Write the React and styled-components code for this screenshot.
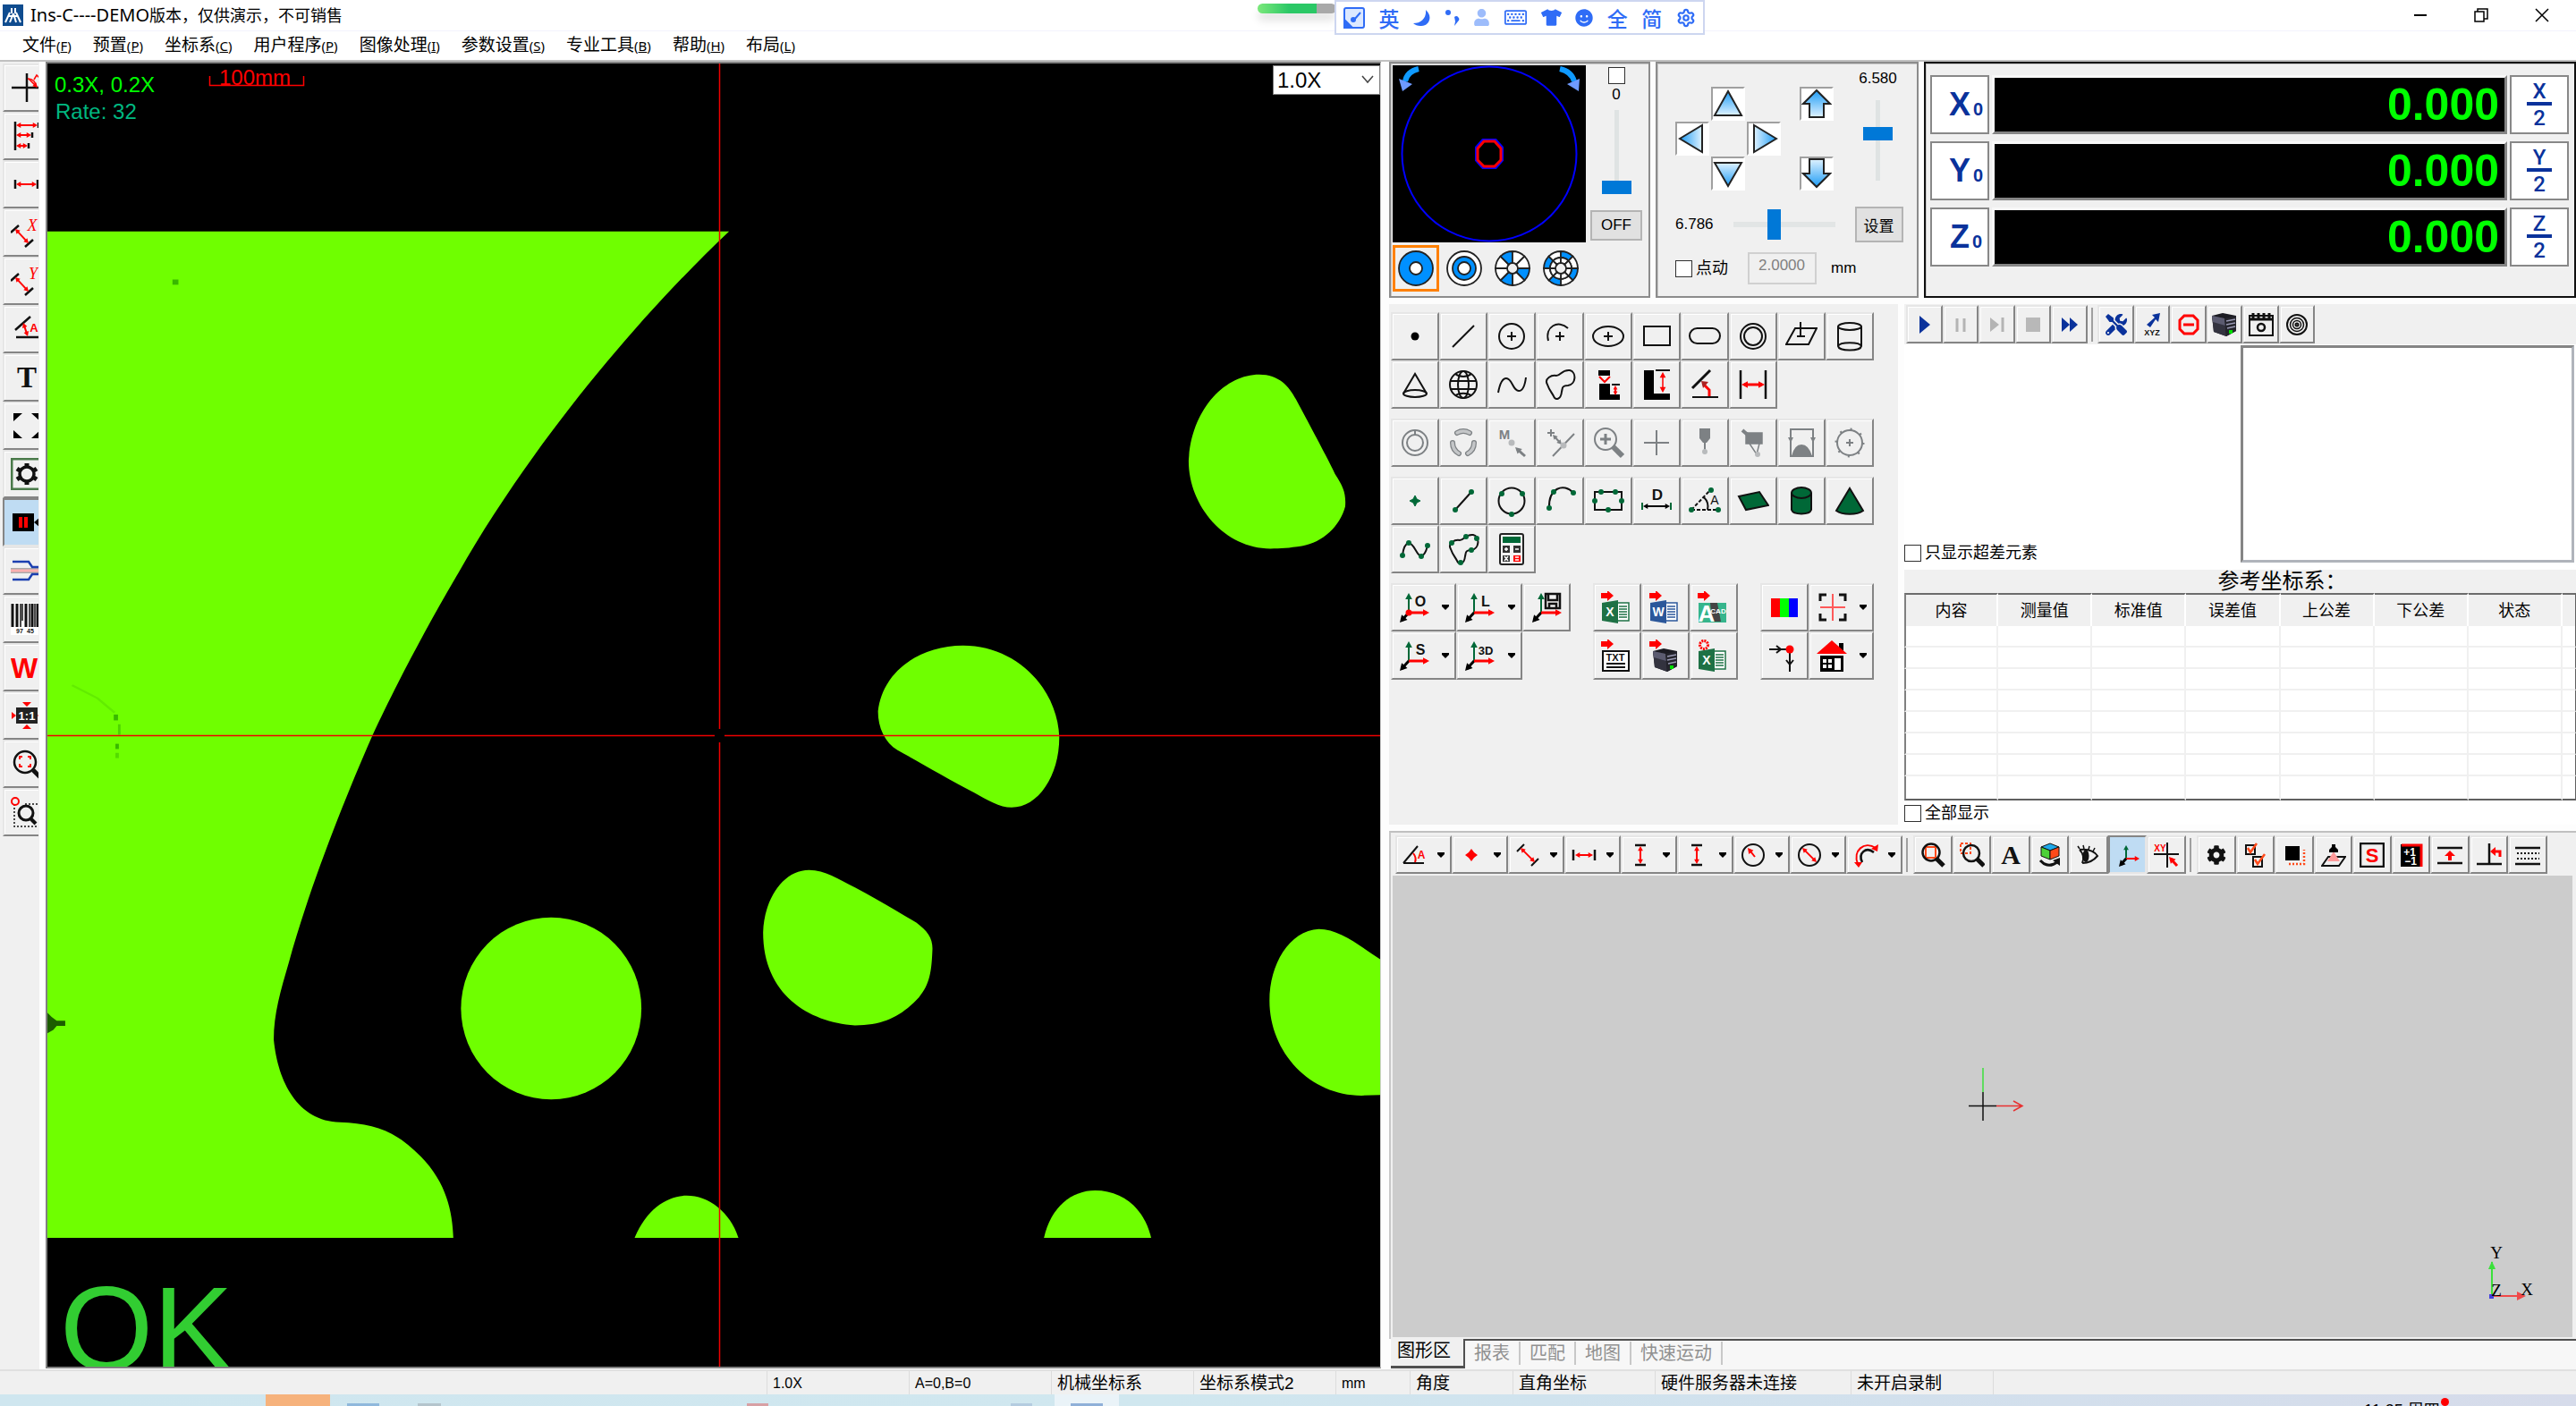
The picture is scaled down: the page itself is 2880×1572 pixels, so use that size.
import React, { useState } from 'react';
import styled, { createGlobalStyle, css } from 'styled-components';
import { FaMoon, FaUser, FaRegKeyboard, FaTshirt, FaSmile, FaCog, FaTools } from 'react-icons/fa';
import { Settings } from 'lucide-react';

const GREEN = '#006837';
const RED = '#ff0000';
const NAVY = '#0a329b';
const CJK = '"Liberation Sans", "Noto Sans CJK SC", sans-serif';

const GlobalStyle = createGlobalStyle`
    * {
        box-sizing: border-box;
    }
    body {
        margin: 0;
        background: #fdfdfd;
        color: #000000;
        font-family: ${CJK};
        font-size: 18px;
    }
    button, input, select {
        font-family: inherit;
        color: inherit;
        margin: 0;
    }
    svg {
        display: block;
        flex-shrink: 0;
    }
`;

/* ---------- layout ---------- */

const Page = styled.div`
    display: flex;
    flex-direction: column;
    height: 100vh;
    overflow: hidden;
`;

const TitleBar = styled.header`
    position: relative;
    height: 35px;
    display: flex;
    align-items: center;
    padding-left: 3px;
    gap: 8px;
    background: #ffffff;
    border-bottom: 1px solid #f3f3fd;
`;

const Title = styled.h1`
    margin: 0;
    flex: 1;
    font-size: 18px;
    font-weight: 400;
    line-height: 32px;
`;

const TitleLatin = styled.span`
    font-family: "Noto Sans", sans-serif;
    font-size: 20px;
`;

const WindowButtons = styled.div`
    display: flex;
    padding-right: 4px;
`;

const WindowButton = styled.button`
    width: 68px;
    height: 32px;
    padding: 0;
    border: none;
    background: none;
    display: flex;
    justify-content: center;
    align-items: center;
`;

const Progress = styled.div`
    position: absolute;
    left: 1406px;
    top: 4px;
    width: 88px;
    height: 11px;
    border-radius: 6px;
    background: linear-gradient(90deg, #7be87b, #2bc866 40%, #2bc866 75%, #a9a9a9 75%);
    box-shadow: 0 8px 10px #e4e4e4;
`;

const ImeBar = styled.div`
    position: absolute;
    left: 1492px;
    top: 0;
    width: 414px;
    height: 39px;
    padding: 0 8px;
    display: flex;
    align-items: center;
    justify-content: space-between;
    background: #ffffff;
    border: 2px solid #cdd6f0;
    color: #2f6cf6;
    font-size: 23px;
    font-weight: 500;
    z-index: 2;
`;

const MenuBar = styled.nav`
    height: 32px;
    padding-left: 25px;
    display: flex;
    align-items: center;
    gap: 24px;
    background: #ffffff;
`;

const MenuLink = styled.a`
    color: #000000;
    font-size: 19px;
    line-height: 30px;
    text-decoration: none;
    white-space: nowrap;
`;

const HotKey = styled.span`
    font-family: "Noto Sans", sans-serif;
    font-size: 15px;
`;

const Main = styled.main`
    flex: 1;
    min-height: 0;
    display: grid;
    grid-template-columns: 51px minmax(0, 1493fr) minmax(0, 1336fr);
    border-top: 2px solid #c0c0c0;
`;

const SideBar = styled.aside`
    background: linear-gradient(90deg, #f0f0f0 44px, #ffffff 44px);
    padding: 2px 0 0 3px;
`;

const bevel = css`
    border: 2px solid;
    border-color: #e6e6e6 #858585 #858585 #e6e6e6;
    box-shadow: inset 1px 1px #ffffff;
`;

const SideButton = styled.button`
    width: 40px;
    height: 54px;
    padding: 0 0 0 7px;
    display: flex;
    align-items: center;
    overflow: hidden;
    background: ${(props) => (props.$active ? '#bfdcf3' : '#f0f0f0')};
    ${bevel}
    border-right: none;
    ${(props) => props.$active && css`
        border-color: #858585 #858585 #e6e6e6 #858585;
        box-shadow: none;
    `}
`;

const Viewport = styled.section`
    position: relative;
    margin-bottom: 1px;
    border: 2px solid #808080;
    border-right: 1px solid #d0d0d0;
    background: #000000;
    overflow: hidden;
`;

const ViewportPicture = styled.svg`
    position: absolute;
    left: 0;
    top: 0;
    width: 100%;
    height: 100%;
`;

const ZoomBox = styled.div`
    position: absolute;
    right: 0;
    top: 2px;
    width: 120px;
    height: 33px;
    background: #ffffff;
    border: 1px solid #808080;
`;

const ZoomSelect = styled.select`
    appearance: none;
    width: 100%;
    height: 100%;
    padding: 0 4px;
    border: none;
    background: none;
    font-size: 24px;
`;

const ZoomChevron = styled.svg`
    position: absolute;
    right: 6px;
    top: 10px;
    pointer-events: none;
`;

const RightSide = styled.div`
    display: flex;
    flex-direction: column;
    padding-left: 9px;
    min-height: 0;
`;

const TopRow = styled.div`
    display: grid;
    grid-template-columns: 292px 294px minmax(0, 1fr);
    gap: 6px;
    height: 264px;
`;

const Panel = styled.section`
    background: #f0f0f0;
    border: 2px solid ${(props) => (props.$dark ? '#101010' : '#8c8c8c')};
    box-shadow: inset 1px 1px #c8c8c8;
`;

const MidRow = styled.div`
    display: grid;
    grid-template-columns: 569px minmax(0, 1fr);
    gap: 7px;
    height: 582px;
    margin: 7px 0;
`;

/* ---------- controls ---------- */

const ToolButton = styled.button`
    width: ${(props) => props.$w || 54}px;
    height: ${(props) => props.$h || 54}px;
    padding: 0 ${(props) => (props.$drop ? '6px' : '0')};
    display: flex;
    align-items: center;
    justify-content: ${(props) => (props.$drop ? 'space-between' : 'center')};
    background: ${(props) => (props.$active ? '#bfdcf3' : '#f0f0f0')};
    ${bevel}
    ${(props) => props.$active && css`
        border-color: #858585 #e6e6e6 #e6e6e6 #858585;
        box-shadow: none;
    `}
`;

const CheckBox = styled.input`
    appearance: none;
    width: 19px;
    height: 19px;
    flex-shrink: 0;
    border: 1px solid #303030;
    background: #ffffff;
    &:checked {
        background: #0078d7;
    }
`;

const CheckLabel = styled.label`
    display: flex;
    align-items: center;
    gap: 4px;
    font-size: 18px;
    line-height: 22px;
`;

const thumb = css`
    appearance: none;
    border: none;
    border-radius: 0;
    background: #0078d7;
`;

const HSlider = styled.input`
    appearance: none;
    width: 114px;
    height: 34px;
    background: linear-gradient(#e2e5e5, #e2e5e5) center / 100% 6px no-repeat;
    &::-webkit-slider-thumb {
        ${thumb}
        width: 15px;
        height: 34px;
    }
`;

const VSlider = styled.input`
    appearance: none;
    writing-mode: vertical-lr;
    direction: rtl;
    width: 33px;
    height: ${(props) => props.$length}px;
    background: linear-gradient(#dfe3e3, #dfe3e3) center / 5px 100% no-repeat;
    &::-webkit-slider-thumb {
        ${thumb}
        width: 33px;
        height: 15px;
    }
`;

const FlatButton = styled.button`
    width: ${(props) => props.$w}px;
    height: ${(props) => props.$h}px;
    padding: 0;
    border: 2px solid #b4b4b4;
    background: #e1e1e1;
    font-size: 17px;
`;

/* ---------- light panel ---------- */

const LightPanel = styled(Panel)`
    padding: 2px 2px 0;
    display: grid;
    grid-template-columns: 216px 58px;
    grid-template-rows: 198px 52px;
    column-gap: 5px;
    row-gap: 3px;
`;

const RingBox = styled.div`
    background: #000000;
`;

const LightColumn = styled.div`
    display: flex;
    flex-direction: column;
    align-items: center;
    padding-top: 2px;
`;

const LightValue = styled.output`
    font-size: 17px;
    line-height: 24px;
    margin-bottom: 5px;
`;

const LightOff = styled(FlatButton)`
    margin-top: 18px;
`;

const RingRow = styled.div`
    grid-column: 1 / 3;
    display: flex;
    gap: 2px;
`;

const RingButton = styled.button`
    width: 52px;
    height: 52px;
    padding: 0;
    display: flex;
    align-items: center;
    justify-content: center;
    background: none;
    border: 3px solid ${(props) => (props.$active ? '#ff8000' : 'transparent')};
`;

/* ---------- motion panel ---------- */

const MotionPanel = styled(Panel)`
    padding: 5px 14px 0 20px;
    display: flex;
    flex-direction: column;
`;

const MotionTop = styled.div`
    display: flex;
    height: 137px;
`;

const Pad = styled.div`
    display: grid;
    grid-template-columns: repeat(3, 39px);
    grid-template-rows: repeat(3, 39px);
    grid-template-areas: ". up ." "left . right" ". down .";
    column-gap: 1px;
    margin-top: 21px;
`;

const PadButton = styled.button`
    grid-area: ${(props) => props.$area || 'auto'};
    width: 38px;
    height: 38px;
    padding: 0;
    display: flex;
    align-items: center;
    justify-content: center;
    background: #ffffff;
    border: 2px solid;
    border-color: #a0a0a0 #ffffff #ffffff #a0a0a0;
`;

const Lift = styled.div`
    margin: 21px 0 0 20px;
    display: flex;
    flex-direction: column;
    gap: 40px;
`;

const SpeedColumn = styled.div`
    flex: 1;
    display: flex;
    flex-direction: column;
    align-items: center;
    gap: 12px;
    padding-left: 20px;
    font-size: 17px;
    line-height: 24px;
`;

const MotionRow = styled.div`
    display: flex;
    align-items: center;
    gap: 22px;
    height: 40px;
    margin-top: 18px;
    font-size: 17px;
`;

const JogRow = styled.div`
    display: flex;
    align-items: center;
    gap: 16px;
    margin-top: 11px;
    font-size: 17px;
`;

const JogInput = styled.input`
    width: 77px;
    height: 36px;
    margin-left: 6px;
    padding: 0 10px 6px;
    border: 2px solid #d0d0d0;
    background: #f0f0f0;
    color: #808080;
    font-size: 17px;
`;

/* ---------- readout ---------- */

const Readout = styled(Panel)`
    padding: 13px 6px 0 5px;
    display: flex;
    flex-direction: column;
    gap: 8px;
`;

const AxisRow = styled.div`
    display: grid;
    grid-template-columns: 66px minmax(0, 1fr) 66px;
    gap: 3px;
    height: 66px;
`;

const AxisButton = styled.button`
    padding: 0;
    background: #ffffff;
    border: 2px solid #888888;
    color: ${NAVY};
    display: flex;
    align-items: center;
    justify-content: center;
`;

const ZeroButton = styled(AxisButton)`
    align-items: baseline;
    padding: 9px 4px 0 18px;
    gap: 3px;
    font-size: 36px;
    font-weight: 700;
    line-height: 44px;
`;

const ZeroSub = styled.span`
    font-size: 20px;
`;

const HalfButton = styled(AxisButton)`
    flex-direction: column;
    font-family: Roboto, sans-serif;
    font-size: 24px;
    font-weight: 500;
    line-height: 22px;
`;

const HalfBar = styled.span`
    width: 28px;
    height: 4px;
    margin: 1px 0 3px;
    background: ${NAVY};
`;

const AxisValue = styled.output`
    padding-right: 6px;
    border: 3px solid;
    border-color: #f8f8f8 #858585 #858585 #f8f8f8;
    background: #000000;
    color: #00ff00;
    font-size: 50px;
    font-weight: 700;
    line-height: 60px;
    text-align: right;
`;

/* ---------- tool area ---------- */

const ToolArea = styled.section`
    background: #f0f0f0;
    padding: 9px 2px;
    display: flex;
    flex-direction: column;
    gap: 11px;
`;

const ToolGrid = styled.div`
    display: grid;
    grid-template-columns: repeat(10, 54px);
`;

const ToolGroups = styled.div`
    display: flex;
    gap: 25px;
`;

const ToolGroup = styled.div`
    display: grid;
    grid-template-columns: ${(props) => props.$cols};
    align-content: start;
`;

/* ---------- elements panel ---------- */

const ElementPanel = styled.section`
    display: flex;
    flex-direction: column;
    background: #ffffff;
`;

const RunBar = styled.div`
    height: 45px;
    padding: 1px 2px;
    display: flex;
    align-items: center;
    background: #f0f0f0;
`;

const BarSeparator = styled.span`
    width: 2px;
    height: 38px;
    margin: 0 ${(props) => props.$right || 4}px 0 4px;
    background: #a0a0a0;
`;

const ListRow = styled.div`
    height: 244px;
    display: grid;
    grid-template-columns: 1fr 1fr;
`;

const ListLeft = styled.div`
    display: flex;
    align-items: flex-end;
`;

const ListBox = styled.div`
    margin: 1px 2px 0 0;
    border: 3px solid;
    border-color: #858585 #b0b4bb #b0b4bb #858585;
    background: #ffffff;
`;

const ElementTable = styled.table`
    width: 100%;
    margin-top: 8px;
    border-collapse: separate;
    border-spacing: 0;
    table-layout: fixed;
`;

const Caption = styled.caption`
    height: 26px;
    padding-left: 94px;
    background: #f0f0f0;
    font-size: 24px;
    line-height: 26px;
`;

const HeadCell = styled.th`
    width: ${(props) => props.$w};
    height: 37px;
    padding: 0;
    background: #f0f0f0;
    border-top: 2px solid #6c6c6c;
    border-right: 2px solid #ffffff;
    font-weight: 400;
    line-height: 24px;
    &:first-child {
        border-left: 2px solid #808080;
    }
    &:last-child {
        border-right: 1px solid #606060;
    }
`;

const Cell = styled.td`
    height: 24px;
    padding: 0;
    border-right: 2px solid #f0f0f0;
    border-bottom: 2px solid #f0f0f0;
    &:first-child {
        border-left: 2px solid #808080;
    }
    &:last-child {
        border-right: 1px solid #606060;
    }
    tr:last-child > & {
        height: 27px;
        border-bottom: 2px solid #606060;
    }
`;

const ShowAll = styled.div`
    padding-top: 3px;
`;

/* ---------- graph ---------- */

const GraphPanel = styled.section`
    flex: 1;
    min-height: 0;
    display: flex;
    flex-direction: column;
    padding: 0 4px 2px 2px;
    background: #f0f0f0;
    border-top: 2px solid #c0c0c0;
    border-left: 2px solid #c8c8c8;
`;

const GraphBar = styled.div`
    height: 48px;
    padding: 1px 3px 0;
    display: flex;
    align-items: center;
`;

const GraphCanvas = styled.div`
    position: relative;
    flex: 1;
    min-height: 0;
    background: #cccccc;
`;

const Origin = styled.svg`
    position: absolute;
    left: 50%;
    top: 50%;
    margin: -44px 0 0 -18px;
`;

const AxesMark = styled.svg`
    position: absolute;
    right: 44px;
    bottom: 34px;
`;

const Tabs = styled.div`
    height: 34px;
    display: flex;
    align-items: flex-start;
    background: #f7f7f7;
    border-top: 2px solid #505050;
    margin-left: 2px;
`;

const Tab = styled.button`
    height: ${(props) => (props.$active ? 33 : 26)}px;
    margin-top: ${(props) => (props.$active ? -2 : 1)}px;
    padding: ${(props) => (props.$active ? '0 14px 4px 7px' : '0 10px')};
    border: none;
    border-right: 2px solid ${(props) => (props.$active ? '#505050' : '#c8c8c8')};
    ${(props) => props.$active && 'border-bottom: 3px solid #505050;'}
    background: ${(props) => (props.$active ? '#f0f0f0' : 'none')};
    color: ${(props) => (props.$active ? '#000000' : '#909090')};
    font-size: 20px;
    line-height: 26px;
    white-space: nowrap;
`;

/* ---------- bottom ---------- */

const StatusBar = styled.footer`
    height: 28px;
    display: grid;
    grid-template-columns: ${(props) => props.$cols};
    background: #f0f0f0;
    border-top: 2px solid #e0e0e0;
`;

const StatusCell = styled.span`
    padding-left: 6px;
    border-left: 1px solid ${(props) => (props.$first ? 'transparent' : '#dcdcdc')};
    font-size: ${(props) => (props.$small ? 16 : 19)}px;
    line-height: 28px;
    white-space: nowrap;
`;

const TaskBar = styled.div`
    position: relative;
    height: 13px;
    overflow: hidden;
    background: linear-gradient(90deg, #cfe6ef, #d0e7ef 45%, #d0e3ee 60%, #d6dbea);
`;

const TaskItem = styled.span`
    position: absolute;
    left: ${(props) => props.$x}px;
    bottom: 0;
    width: ${(props) => props.$w}px;
    height: ${(props) => props.$h}px;
    background: ${(props) => props.$c};
`;

const Clock = styled.time`
    position: absolute;
    left: 2643px;
    top: 6px;
    font-size: 18px;
    line-height: 24px;
`;

const ClockDot = styled.span`
    position: absolute;
    left: 2729px;
    top: 4px;
    width: 9px;
    height: 9px;
    border-radius: 50%;
    background: ${RED};
`;

/* ---------- icon helpers ---------- */

const Icon = ({ box = 36, size, children }) => (
    <svg width={size || box} height={size || box} viewBox={`0 0 ${box} ${box}`} fill="none" stroke="#111" strokeWidth="2" aria-hidden="true">
        {children}
    </svg>
);

const Arrow = ({ x1, y1, x2, y2, c = RED, both, w = 2, h = 6 }) => {
    const a = Math.atan2(y2 - y1, x2 - x1);
    const head = (x, y, t) => {
        const p = (d) => `${x - h * Math.cos(t + d)},${y - h * Math.sin(t + d)}`;
        return <polygon points={`${x},${y} ${p(0.5)} ${p(-0.5)}`} fill={c} stroke="none" />;
    };
    return (
        <g>
            <line x1={both ? x1 + 3 * Math.cos(a) : x1} y1={both ? y1 + 3 * Math.sin(a) : y1} x2={x2 - 3 * Math.cos(a)} y2={y2 - 3 * Math.sin(a)} stroke={c} strokeWidth={w} />
            {head(x2, y2, a)}
            {both && head(x1, y1, a + Math.PI)}
        </g>
    );
};

const Letter = ({ x, y, s = 14, c = '#111', children, bold = true, serif, italic }) => (
    <text x={x} y={y} fontSize={s} fill={c} stroke="none" fontWeight={bold ? 700 : 400} fontStyle={italic ? 'italic' : 'normal'}
        fontFamily={serif ? 'Liberation Serif, serif' : 'Liberation Sans, sans-serif'} textAnchor="middle">{children}</text>
);

const Dots = ({ at, r = 3 }) => at.map(([x, y]) => <circle key={`${x}-${y}`} cx={x} cy={y} r={r} fill={GREEN} stroke="none" />);

const Caret = () => (
    <svg width="8" height="6" viewBox="0 0 8 6" aria-hidden="true"><path d="M0 0H8V2L4 6L0 2Z" fill="#000" /></svg>
);

const Server = ({ x = 0, y = 0 }) => (
    <g transform={`translate(${x} ${y})`} stroke="none">
        <path d="M0 3L12 0L27 3V20L16 26L2 21Z" fill="#1b1b22" />
        <path d="M0 3L14 6L16 26L2 21Z" fill="#33333f" />
        <path d="M0 3L14 6L15 14L1 10Z" fill="#5b5b70" />
        <path d="M14 6L27 3V20L16 26Z" fill="#24242c" />
        <path d="M16 9L26 7M16 13L26 11M17 17L26 15" stroke="#9a9ab4" strokeWidth="1.5" />
        <rect x="19" y="19" width="4" height="4" fill="#00e000" />
    </g>
);

const Book = ({ c, letter }) => (
    <g>
        <rect x="17" y="13" width="14" height="20" fill="#fff" stroke={c} strokeWidth="1.5" />
        <path d="M20 17H29M20 20H29M20 23H29M20 26H29M20 29H29" stroke={c} strokeWidth="1.5" />
        <path d="M1 13L19 10V36L1 33Z" fill={c} stroke="none" />
        <Letter x={10} y={28} s={14} c="#fff">{letter}</Letter>
    </g>
);

const RedArrow = () => <path d="M0 2H7V-1L14 5L7 11V8H0Z" fill={RED} stroke="none" />;

/* ---------- icons ---------- */

const sideIcons = [
    ['十字线', <><path d="M1 18H36M18 2V34" strokeWidth="2.5" /><path d="M19 8C25 8 28 12 28 16" stroke={RED} strokeWidth="1.5" /><Arrow x1={20} y1={8} x2={30} y2={18} w={1.5} /><path d="M26 9L29 4L33 8" stroke={RED} strokeWidth="1.5" /></>],
    ['连续测量', <><path d="M5 2V34M31 3V9M24 14V20M20 26V32" strokeWidth="2.5" /><Arrow both x1={6} y1={6} x2={30} y2={6} /><Arrow both x1={6} y1={17} x2={23} y2={17} /><Arrow both x1={6} y1={29} x2={19} y2={29} /></>],
    ['距离', <><path d="M5 13V23M30 13V23" strokeWidth="2.5" /><Arrow both x1={6} y1={18} x2={29} y2={18} /></>],
    ['X 距离', <><path d="M0 18L9 10M16 34L25 26" strokeWidth="2.5" /><Arrow both x1={5} y1={14} x2={20} y2={30} /><Letter x={24} y={16} s={18} c={RED} serif italic bold={false}>X</Letter></>],
    ['Y 距离', <><path d="M0 18L9 10M16 34L25 26" strokeWidth="2.5" /><Arrow both x1={5} y1={14} x2={20} y2={30} /><Letter x={25} y={16} s={18} c={RED} serif italic bold={false}>Y</Letter></>],
    ['角度', <><path d="M5 19L22 4M6 27H36" strokeWidth="2.5" /><Arrow both x1={14} y1={11} x2={19} y2={26} /><Letter x={26} y={21} s={13} c={RED}>A</Letter></>],
    ['文字', <Letter x={18} y={29} s={33} serif>T</Letter>],
    ['全屏', <path d="M3 4H13L3 13ZM33 4H23L33 13ZM3 32H13L3 23ZM33 32H23L33 23Z" fill="#000" stroke="none" />],
    ['设置', <><path d="M36 1H1V35H36" stroke="#4a7a4a" strokeWidth="3" /><g transform="translate(6 6)" stroke="#111" strokeWidth="3.5"><circle cx="12" cy="12" r="8" /><path d="M12 4V0M12 20V24M4 8L1 6M20 8L23 6M4 16L1 18M20 16L23 18" strokeWidth="5" /></g></>],
    ['暂停', <><rect x="2" y="8" width="24" height="20" fill="#000" stroke="none" /><path d="M11 12V24M17 12V24" stroke="#f00" strokeWidth="4" /><path d="M26 18L33 12V24Z" fill="#000" stroke="none" /></>],
    ['轮廓', <><path d="M0 18H36" stroke="#aaa" strokeWidth="6" /><path d="M0 18H36" stroke="#ffb0b0" strokeWidth="3" /><path d="M2 8H20L24 14H36M2 28H20L24 22H36" stroke="#1c40b0" strokeWidth="2.5" /></>],
    ['条码', <><rect x="0" y="0" width="36" height="36" fill="#fff" stroke="none" /><path d="M2 1V27M7 1V27M17 1V27M24 1V27M30 1V27" strokeWidth="3" /><path d="M11 1V27M13 1V20M21 1V27M27 1V27" strokeWidth="1.5" /><Letter x={10} y={34} s={7}>97</Letter><Letter x={22} y={34} s={7}>45</Letter></>],
    ['W', <Letter x={15} y={30} s={32} c="#f00">W</Letter>],
    ['1:1', <><rect x="6" y="9" width="24" height="18" fill="#222" stroke="none" /><Letter x={18} y={23} s={13} c="#fff">1:1</Letter><path d="M13 3H23L18 8ZM13 33H23L18 28ZM1 14V22L6 18ZM35 14V22L30 18Z" fill="#f00" stroke="none" /></>],
    ['适合窗口', <><circle cx="16" cy="16" r="12" strokeWidth="2.5" /><path d="M10 13V10H13M19 10H22V13M22 18V21H19M13 21H10V18" stroke="#f00" strokeWidth="2" /><path d="M25 25L33 33" strokeWidth="5" /></>],
    ['框选放大', <><path d="M4 9V34H32V9H14" strokeDasharray="2 2" strokeWidth="1.5" /><circle cx="17" cy="19" r="8" strokeWidth="3" /><path d="M22 25L28 31" strokeWidth="4" /><circle cx="5" cy="6" r="4" stroke="#f00" /></>],
];

const blob = 'M4 18C0 11 9 7 14 8C19 8 20 1 29 2C37 4 36 18 27 19C20 19 21 22 20 26C19 35 13 36 11 31C9 27 6 24 4 18Z';

const shapeIcons = [
    ['点', <circle cx="18" cy="18" r="4.5" fill="#000" stroke="none" />],
    ['线', <path d="M6 30L30 6" />],
    ['圆', <><circle cx="18" cy="18" r="14" /><path d="M18 13V23M13 18H23" /></>],
    ['弧', <><path d="M5 23C1 7 16 -1 27 9" /><path d="M18 13V23M13 18H23" /></>],
    ['椭圆', <><ellipse cx="18" cy="18" rx="17" ry="11" /><path d="M18 13V23M13 18H23" /></>],
    ['矩形', <rect x="4" y="7" width="29" height="21" />],
    ['键槽', <rect x="1" y="9" width="34" height="17" rx="8.5" />],
    ['圆环', <><circle cx="18" cy="18" r="14" /><circle cx="18" cy="18" r="10" /></>],
    ['平面', <><path d="M1 27L11 9H35L26 27Z" /><path d="M17 2V18M13 18H22" /></>],
    ['圆柱', <><ellipse cx="18" cy="7" rx="13" ry="4" /><path d="M5 7V29C6 35 30 35 31 29V7M5 29C7 24 29 24 31 29" /></>],
    ['圆锥', <><path d="M5 28L18 6L31 28" /><ellipse cx="18" cy="28" rx="13" ry="4" /></>],
    ['球', <><circle cx="18" cy="18" r="15" /><ellipse cx="18" cy="18" rx="6" ry="15" /><path d="M4 14H32M4 23H32M9 6C14 10 22 10 27 6M9 30C14 27 22 27 27 30" /></>],
    ['曲线', <path d="M3 27C5 16 8 11 12 11C19 11 19 25 26 25C31 25 33 18 34 10" />],
    ['闭合曲线', <path d={blob} />],
    ['高度', <><path d="M7 2H20V8H7ZM8 17H20V29H31V35H8Z" fill="#000" stroke="none" /><path d="M8 9L14 15L20 9" stroke="#f00" /><path d="M22 18H31" /><Arrow both x1={26} y1={19} x2={26} y2={30} h={5} /></>],
    ['深度', <><path d="M4 2H15V28H33V35H4Z" fill="#000" stroke="none" /><path d="M17 2H33" /><Arrow both x1={25} y1={4} x2={25} y2={27} h={7} w={1.5} /></>],
    ['夹角', <><path d="M4 22L24 2" strokeWidth="3" /><path d="M4 32H33" /><path d="M23 31V24L16 17" stroke="#f00" strokeWidth="3" /><path d="M14 14L22 15L16 22Z" fill="#a22" stroke="none" /></>],
    ['宽度', <><path d="M4 2V34M32 2V34" strokeWidth="2.5" /><Arrow both x1={5} y1={18} x2={31} y2={18} w={3} h={8} /></>],
];

const grey = '#7d8184';
const probeIcons = [
    ['内外圆', <g stroke={grey}><circle cx="18" cy="18" r="14" /><circle cx="18" cy="18" r="9" /><path d="M18 5V9" /></g>],
    ['三段圆', <g stroke={grey} strokeWidth="6" strokeLinecap="round"><path d="M11 7Q18 3 25 7M6 18Q6 26 13 30M30 18Q30 26 23 30" /><path d="M11 7Q18 3 25 7M6 18Q6 26 13 30M30 18Q30 26 23 30" stroke="#c4c6c8" strokeWidth="3.5" /></g>],
    ['中点', <g><Letter x={10} y={14} s={15} c={grey}>M</Letter><circle cx="18" cy="18" r="3.5" fill="#b8babc" stroke="none" /><Arrow x1={33} y1={33} x2={22} y2={23} c={grey} w={3} h={8} /></g>],
    ['投影', <g stroke={grey}><path d="M10 33L34 8M8 3V11M4 7H12" /><Arrow both x1={10} y1={9} x2={20} y2={20} c={grey} /><circle cx="22" cy="21" r="3.5" fill="#b8babc" stroke="none" /></g>],
    ['放大', <g stroke={grey}><circle cx="15" cy="14" r="12" /><path d="M15 8V20M9 14H21" strokeWidth="3" /><path d="M23 22L34 33" strokeWidth="6" /></g>],
    ['十字', <path d="M18 4V32M4 18H32" stroke={grey} />],
    ['测针', <g stroke="none" fill={grey}><path d="M12 2H24V13L20 18H16L12 13Z" /><path d="M18 18V28" stroke={grey} /><circle cx="18" cy="28" r="3" fill="#b8babc" /></g>],
    ['激光', <g fill={grey} stroke={grey} strokeWidth="1.5"><rect x="10" y="7" width="18" height="12" /><path d="M6 4L14 11" strokeWidth="4" /><path d="M14 19L22 31L25 19" fill="none" /><circle cx="23" cy="31" r="3" fill="#b8babc" stroke="none" /></g>],
    ['扫描', <g stroke={grey}><path d="M6 3H31V33H6Z" /><path d="M8 33C12 17 24 17 29 33Z" fill={grey} /><path d="M3 12H9L6 18ZM28 12H34L31 18Z" fill={grey} stroke="none" /></g>],
    ['多点圆', <g stroke={grey}><circle cx="18" cy="18" r="14" /><path d="M18 14V22M14 18H22" /><circle cx="18" cy="18" r="15" strokeDasharray="2 9.8" strokeWidth="3" /></g>],
];

const buildIcons = [
    ['构造点', <path d="M18 12L20 16L24 18L20 20L18 24L16 20L12 18L16 16Z" fill={GREEN} stroke={GREEN} strokeWidth="1" />],
    ['构造线', <><path d="M9 28L27 8" /><Dots at={[[9, 28], [27, 8]]} /></>],
    ['构造圆', <><circle cx="18" cy="18" r="14.5" /><Dots at={[[7, 10], [30, 10], [18, 33]]} /></>],
    ['构造弧', <><path d="M6 26C5 4 22 -3 33 9" /><Dots at={[[6, 26], [11, 8], [33, 9]]} /></>],
    ['构造矩形', <><rect x="3" y="8" width="30" height="20" /><Dots at={[[10, 8], [26, 8], [3, 18], [33, 18], [18, 28]]} /></>],
    ['构造距离', <><Letter x={19} y={17} s={17}>D</Letter><path d="M2 20V28M34 20V28" stroke={GREEN} /><Arrow both x1={3} y1={24} x2={33} y2={24} c="#000" /></>],
    ['构造角度', <><path d="M3 28L25 5M3 28H33" strokeDasharray="4 2" /><path d="M17 14Q23 20 21 28" /><Dots at={[[3, 28], [25, 6], [33, 28]]} /><Letter x={29} y={22} s={14} bold={false}>A</Letter></>],
    ['构造平面', <path d="M2 13L25 8L35 23L10 28Z" fill={GREEN} />],
    ['构造圆柱', <><path d="M7 9V28C9 34 27 34 29 28V9" fill={GREEN} /><ellipse cx="18" cy="9" rx="11" ry="6" fill={GREEN} /></>],
    ['构造圆锥', <path d="M18 4L33 29C26 34 10 34 3 29Z" fill={GREEN} />],
    ['构造曲线', <><path d="M4 25C5 16 7 12 11 11C17 11 20 26 25 26C30 24 31 18 32 14" /><Dots at={[[4, 25], [11, 11], [25, 26], [32, 14]]} /></>],
    ['构造闭合', <><path d={blob} /><Dots at={[[5, 11], [21, 4], [33, 6], [27, 19], [15, 33]]} /></>],
    ['计算器', <><rect x="5" y="1" width="26" height="34" rx="2" fill="#f4f4f4" stroke="#222" /><rect x="8" y="4" width="20" height="7" fill={GREEN} stroke="none" /><path d="M8 14H16V22H8ZM20 14H28V22H20ZM8 25H16V32H8Z" fill="#333" stroke="none" /><path d="M20 25H28V32H20Z" fill="#f00" stroke="none" /><path d="M12 16V20M10 18H14M22 18H26M10 26L14 31M14 26L10 31M22 27H26M22 30H26" stroke="#fff" strokeWidth="1.5" /></>],
];

const Axes = ({ label, save, dot }) => (
    <Icon>
        <Arrow x1={12} y1={24} x2={12} y2={2} c={GREEN} h={8} />
        <Arrow x1={12} y1={24} x2={2} y2={35} c="#000" w={3} h={9} />
        <Arrow x1={12} y1={24} x2={35} y2={24} w={3} h={8} />
        {dot && <circle cx="12" cy="24" r="3.5" fill={RED} stroke="none" />}
        {label && <Letter x={25} y={17} s={label.length > 1 ? 13 : 16}>{label}</Letter>}
        {save && <path d="M17 3H33V19H17ZM20 3V10H30V3M21 19V14H29V19" strokeWidth="2.5" />}
    </Icon>
);

const exportIcons = [
    ['导出 Excel', <><RedArrow /><Book c="#1e7145" letter="X" /></>],
    ['导出 Word', <><RedArrow /><Book c="#2b579a" letter="W" /></>],
    ['导出 CAD', <><RedArrow /><rect x="1" y="13" width="31" height="22" fill="#36b58c" stroke="none" /><path d="M14 13H22L26 34H16Z" fill="#444" stroke="none" /><Letter x={10} y={34} s={26} c="#fff">A</Letter><Letter x={23} y={25} s={8} c="#fff">CAD</Letter></>],
    ['导出 TXT', <><RedArrow /><rect x="2" y="13" width="29" height="22" fill="#fff" /><Letter x={16} y={24} s={11}>TXT</Letter><path d="M6 27H27M6 31H27" /></>],
    ['导出数据库', <><RedArrow /><Server x={4} y={10} /></>],
    ['Excel 设置', <><circle cx="7" cy="6" r="4.5" stroke={RED} strokeWidth="3" strokeDasharray="2 1" /><Book c="#1e7145" letter="X" /></>],
];

const graphIcons = [
    ['角度标注', <><path d="M1 23H24M1 23L17 4" /><path d="M12 12Q16 17 14 22" stroke={RED} /><Letter x={21} y={18} s={12} c={RED}>A</Letter></>],
    ['点标注', <path d="M14 7L17 11L21 14L17 17L14 21L11 17L7 14L11 11Z" fill={RED} stroke="none" />],
    ['斜线标注', <><path d="M2 10L10 2M18 26L26 18" /><Arrow both x1={6} y1={6} x2={22} y2={22} /></>],
    ['水平标注', <><path d="M2 8V20M26 8V20" strokeWidth="2.5" /><Arrow both x1={4} y1={14} x2={24} y2={14} /></>],
    ['垂直标注', <><path d="M8 3H20M8 25H20" strokeWidth="2.5" /><Arrow both x1={14} y1={4} x2={14} y2={24} /></>],
    ['高度标注', <><path d="M8 3H20M8 25H20" strokeWidth="2.5" /><Arrow both x1={14} y1={4} x2={14} y2={24} /></>],
    ['半径标注', <><circle cx="14" cy="14" r="12" /><Arrow x1={16} y1={16} x2={8} y2={6} h={7} /></>],
    ['直径标注', <><circle cx="14" cy="14" r="12" /><Arrow both x1={6} y1={6} x2={22} y2={22} /></>],
    ['弧长标注', <><path d="M10 22C5 12 14 4 23 11" strokeWidth="2.5" /><path d="M5 24C-1 9 12 -2 25 6" stroke={RED} /><path d="M1 22L6 28L10 22ZM28 2L27 10L20 7Z" fill={RED} stroke="none" /></>],
];

const viewIcons = [
    ['缩放', <><rect x="6" y="5" width="11" height="12" stroke="#ff4a1a" /><circle cx="12" cy="11" r="9.5" strokeWidth="2.5" /><path d="M18 18L26 26" strokeWidth="5" /></>],
    ['窗口缩放', <><path d="M1 1H12V12H1Z" stroke="#ff4a1a" strokeDasharray="3 2" /><circle cx="13" cy="12" r="9" strokeWidth="2.5" /><path d="M19 18L27 26" strokeWidth="5" /></>],
    ['字体', <Letter x={14} y={24} s={30} serif>A</Letter>],
    ['三维', <><path d="M4 5L14 1L24 5L14 9Z" fill="#1ea8e8" strokeWidth="1" /><path d="M4 5L14 9V19L4 15Z" fill="#4cd137" strokeWidth="1" /><path d="M14 9L24 5V15L14 19Z" fill="#ff4a1a" strokeWidth="1" /><path d="M3 20Q12 30 23 21" strokeWidth="3" /><path d="M25 17V26L17 20Z" fill="#111" stroke="none" /></>],
    ['显示', <><path d="M4 8C13 7 20 9 24 15C19 21 13 23 7 23M4 8C8 12 9 18 7 23" strokeWidth="2" /><ellipse cx="11" cy="15" rx="3.500" ry="7" fill="#111" stroke="none" /><path d="M4 7L2 4M9 7L8 3M14 8L15 4M19 10L21 6" strokeWidth="1.5" /></>],
    ['坐标轴', <><Arrow x1={12} y1={18} x2={12} y2={3} c={GREEN} /><Arrow x1={12} y1={18} x2={27} y2={18} /><Arrow x1={12} y1={18} x2={4} y2={27} c="#000" w={3} h={8} /></>],
    ['XY', <><path d="M0 13H28M15 0V28" /><Letter x={7} y={10} s={10} c={RED}>XY</Letter><Arrow x1={26} y1={26} x2={17} y2={16} w={3} h={8} /></>],
];

const setupIcons = [
    ['图形设置', <FaCog key="cog" size="22" x="3" y="3" color="#111" stroke="none" />],
    ['筛选', <><rect x="3" y="3" width="10" height="10" /><rect x="11" y="16" width="10" height="11" /><path d="M5 6L8 11L15 1M13 19L16 24L24 13" stroke="#ff4a1a" strokeWidth="2.5" /></>],
    ['阴影', <><rect x="4" y="4" width="16" height="16" fill="#000" stroke="none" /><path d="M8 24H25V8" stroke="#ff4a1a" strokeWidth="2.5" strokeDasharray="2 2" /></>],
    ['光源', <><path d="M1 26L8 16H27L20 26Z" /><path d="M14 10L21 21H7Z" fill="#ff9a9a" stroke="none" /><path d="M12 2H16V5L19 8V11H9V8L12 5Z" fill="#000" stroke="none" /></>],
    ['S', <><rect x="1" y="1" width="26" height="26" strokeWidth="2.5" /><Letter x={14} y={22} s={22} c={RED}>S</Letter></>],
    ['公差', <><rect x="2" y="2" width="24" height="25" fill="#000" stroke="none" /><path d="M3 3H25V27" stroke="#f00" strokeWidth="3" /><Letter x={12} y={15} s={12} c="#fff">+1</Letter><Letter x={13} y={25} s={12} c="#fff">−1</Letter></>],
    ['上移', <><path d="M0 6H28M0 23H28" strokeWidth="2.5" /><path d="M14 9L20 15H16V20H12V15H8Z" fill="#f00" stroke="none" /></>],
    ['转向', <><path d="M0 24H28M14 1V24" strokeWidth="2.5" /><path d="M26 16V10H21" stroke="#f00" strokeWidth="3" /><path d="M21 5V15L15 10Z" fill="#f00" stroke="none" /></>],
    ['线型', <><path d="M0 6H28M0 24H28" strokeWidth="2.5" /><path d="M2 12H27M2 18H27" strokeDasharray="2 2" /></>],
];

const runIcons = [
    ['运行', <path d="M8 4L20 14L8 24Z" fill={NAVY} stroke="none" />],
    ['暂停', <path d="M10 7V22M18 7V22" stroke="#b4b4b4" strokeWidth="3" />],
    ['单步', <><path d="M6 6L16 14L6 22Z" fill="#b4b4b4" stroke="none" /><path d="M20 6V22" stroke="#b4b4b4" strokeWidth="3" /></>],
    ['停止', <rect x="6" y="6" width="16" height="16" fill="#b8b8b8" stroke="none" />],
    ['快进', <path d="M5 6L14 14L5 22ZM14 6L23 14L14 22Z" fill={NAVY} stroke="none" />],
];

const runTools = [
    ['工具', <FaTools key="tools" size="24" x="2" y="2" color={NAVY} stroke="none" />],
    ['XYZ', <><path d="M8 14L17 6L14 3L23 1L21 11L18 8L12 17Z" fill={NAVY} stroke="none" /><Letter x={14} y={26} s={9}>XYZ</Letter></>],
    ['禁止', <><path d="M9 4H19L24 9V19L19 24H9L4 19V9Z" stroke="#f00" strokeWidth="3" /><path d="M8 14H20" stroke="#f00" strokeWidth="3" /></>],
    ['服务器', <Server key="server" x={0} y={1} />],
    ['日程', <><rect x="1" y="4" width="26" height="22" /><path d="M1 8H27M5 1V7M11 1V7M17 1V7M23 1V7" strokeWidth="3" /><circle cx="14" cy="17" r="4" strokeWidth="2.5" /></>],
    ['靶标', <><circle cx="14" cy="14" r="11" /><circle cx="14" cy="14" r="7.5" strokeWidth="1.5" /><circle cx="14" cy="14" r="4.5" strokeWidth="1.5" /><circle cx="14" cy="14" r="1.5" /></>],
];

const segment = (r1, r2, a1, a2) => {
    const p = (r, a) => `${20 + r * Math.cos((a * Math.PI) / 180)} ${20 + r * Math.sin((a * Math.PI) / 180)}`;
    return `M${p(r1, a1)}L${p(r2, a1)}A${r2} ${r2} 0 0 1 ${p(r2, a2)}L${p(r1, a2)}A${r1} ${r1} 0 0 0 ${p(r1, a1)}Z`;
};
const octants = [0, 45, 90, 135, 180, 225, 270, 315];

const rings = [
    ['整环', <><circle cx="20" cy="20" r="19" fill="#0090ff" /><circle cx="20" cy="20" r="7" fill="#fff" /></>],
    ['内环', <><circle cx="20" cy="20" r="19" fill="#fff" /><circle cx="20" cy="20" r="13" fill="#0090ff" /><circle cx="20" cy="20" r="7" fill="#fff" /></>],
    ['八分环', octants.map((a) => <path key={a} d={segment(6, 19, a, a + 45)} fill={[0, 90, 225].includes(a) ? '#0090ff' : '#fff'} />)],
    ['双层环', octants.map((a) => (
        <g key={a}>
            <path d={segment(12, 19, a, a + 45)} fill={[0, 90, 180, 270].includes(a) ? '#0090ff' : '#fff'} />
            <path d={segment(6, 12, a, a + 45)} fill="#fff" />
        </g>
    ))],
];

/* ---------- parts ---------- */

const menus = [['文件', 'F'], ['预置', 'P'], ['坐标系', 'C'], ['用户程序', 'P'], ['图像处理', 'I'], ['参数设置', 'S'], ['专业工具', 'B'], ['帮助', 'H'], ['布局', 'L']];

const TopBars = () => (
    <>
        <TitleBar>
            <svg width="23" height="24" viewBox="0 0 23 24" aria-hidden="true">
                <rect width="23" height="24" fill="#0f4c8f" />
                <path d="M3 20L8 9M8 20L12 10M12 10L15 20M15 9L20 20M10 4V10M14 4V10M6 13H17" stroke="#fff" strokeWidth="2" />
            </svg>
            <Title><TitleLatin>Ins-C----DEMO</TitleLatin>版本，仅供演示，不可销售</Title>
            <WindowButtons>
                <WindowButton aria-label="最小化"><svg width="16" height="16"><path d="M1 8H15" stroke="#000" strokeWidth="2" /></svg></WindowButton>
                <WindowButton aria-label="还原"><svg width="16" height="16" fill="none" stroke="#000" strokeWidth="1.5"><path d="M1 4H11V15H1ZM4 4V1H15V12H11" /></svg></WindowButton>
                <WindowButton aria-label="关闭"><svg width="16" height="16"><path d="M1 1L15 15M15 1L1 15" stroke="#000" strokeWidth="1.5" /></svg></WindowButton>
            </WindowButtons>
            <Progress />
            <ImeBar>
                <svg width="24" height="24" viewBox="0 0 24 24" fill="#dce8ff" stroke="#2f6cf6" strokeWidth="2"><rect x="1" y="1" width="22" height="22" rx="2" /><path d="M1 14L10 23H1ZM12 14L19 6" fill="#2f6cf6" /><circle cx="11" cy="14" r="2" fill="#2f6cf6" /></svg>
                <span>英</span>
                <svg width="20" height="20" viewBox="0 0 20 20" fill="#2f6cf6"><path d="M14 1C23 9 17 20 8 19C5 19 2 18 0 16C9 16 15 10 14 1Z" /></svg>
                <svg width="16" height="22" viewBox="0 0 16 22" fill="#2f6cf6"><circle cx="3" cy="5" r="3" /><path d="M10 10A3 3 0 1 1 14 15L10 20L11 15Z" /></svg>
                <FaUser size="19" color="#9dbcfb" />
                <FaRegKeyboard size="25" />
                <FaTshirt size="23" />
                <FaSmile size="20" />
                <span>全</span>
                <span>简</span>
                <Settings size={22} strokeWidth={2.4} />
            </ImeBar>
        </TitleBar>
        <MenuBar>
            {menus.map(([name, key]) => (
                <MenuLink href="#" key={name}>{name}<HotKey>(<u>{key}</u>)</HotKey></MenuLink>
            ))}
        </MenuBar>
    </>
);

const VideoView = () => (
    <Viewport>
        <ViewportPicture viewBox="0 0 1490 1457" preserveAspectRatio="xMinYMin slice">
            <g transform="translate(-1 179) scale(0.9515 0.727)" fill="#6fff00">
                <path d="M0 12H802C690 150 565 350 484 537C440 635 405 725 383 787C350 885 308 1025 285 1135C275 1180 267 1215 267 1255C272 1320 295 1380 345 1382C385 1384 410 1395 440 1435C470 1475 477 1520 478 1560H0Z" />
                <path d="M1425 232C1448 232 1460 250 1468 270C1485 312 1503 355 1514 385C1524 405 1527 415 1526 435C1520 465 1500 490 1475 496C1460 499 1450 500 1438 500C1385 500 1342 435 1342 365C1345 285 1385 232 1425 232Z" />
                <path d="M1077 649C1140 649 1188 715 1190 790C1190 850 1165 898 1134 898C1120 898 1105 886 1090 875C1060 855 1020 824 1000 810C985 798 977 775 977 750C982 690 1025 649 1077 649Z" />
                <path d="M896 994C915 994 930 1008 950 1021C975 1038 1000 1058 1022 1075C1035 1088 1041 1098 1041 1115C1040 1150 1038 1170 1025 1190C1005 1218 985 1233 950 1233C895 1228 842 1185 842 1090C843 1040 865 994 896 994Z" />
                <ellipse cx="593" cy="1207" rx="106" ry="140" />
                <path d="M1570 1134C1545 1113 1520 1085 1495 1085C1460 1087 1437 1140 1437 1195C1437 1275 1485 1341 1545 1341L1570 1340Z" />
                <path d="M691 1560C705 1515 730 1495 752 1495C778 1495 803 1520 813 1560Z" />
                <path d="M1172 1560C1180 1512 1205 1487 1232 1487C1265 1487 1290 1515 1298 1560Z" />
                <g fill="#38b800">
                    <rect x="148" y="86" width="7" height="8" />
                    <rect x="79" y="755" width="5" height="9" />
                    <rect x="84" y="770" width="3" height="16" opacity="0.6" />
                    <rect x="81" y="800" width="4" height="8" />
                    <rect x="81" y="814" width="4" height="8" opacity="0.5" />
                    <path d="M30 710L60 730L80 752" fill="none" stroke="#62ec00" strokeWidth="3" />
                </g>
                <path d="M0 1212L6 1220L12 1226H22V1234H12L8 1240L0 1246Z" fill="#1c5c00" />
            </g>
            <path d="M0 751.5H746M757 751.5H1490M751.5 0V744M751.5 759V1460" stroke="#ee0000" strokeWidth="1.5" />
            <path d="M181.5 14V24.500H286.500V14" fill="none" stroke={RED} strokeWidth="1.5" />
            <g fontFamily="Liberation Sans, sans-serif" fontSize="24">
                <text x="8" y="32" fill="#00ff00">0.3X, 0.2X</text>
                <text x="9" y="62" fill="#00b880">Rate: 32</text>
                <text x="192" y="24" fill={RED}>100mm</text>
                <text x="14" y="1461" fontSize="134" fill="#32cd32">OK</text>
            </g>
        </ViewportPicture>
        <ZoomBox>
            <ZoomSelect aria-label="倍率" defaultValue="1.0X"><option>1.0X</option><option>2.0X</option></ZoomSelect>
            <ZoomChevron width="14" height="10" fill="none" stroke="#444" strokeWidth="1.5"><path d="M1 1L7 8L13 1" /></ZoomChevron>
        </ZoomBox>
    </Viewport>
);

const LightControl = () => {
    const [ring, setRing] = useState(0);
    return (
        <LightPanel>
            <RingBox>
                <svg width="216" height="198" viewBox="0 0 216 198" fill="none">
                    <circle cx="108" cy="99" r="97.500" stroke="#0000ff" strokeWidth="2" />
                    <path d="M101 84H115L122 92V106L115 114H101L94 106V92Z" stroke="#0000ff" strokeWidth="4" />
                    <path d="M102 85H114L121 93V106L114 113H102L95 106V93Z" stroke={RED} strokeWidth="3" />
                    <path d="M29 4Q16 7 14 18M187 4Q200 7 203 18" stroke="#0f9aff" strokeWidth="6" />
                    <path d="M7 15L22 21L11 29ZM209 15L195 21L208 29Z" fill="#6f9bff" />
                </svg>
            </RingBox>
            <LightColumn>
                <CheckBox type="checkbox" aria-label="光源" />
                <LightValue>0</LightValue>
                <VSlider type="range" aria-label="亮度" $length={94} min="0" max="100" defaultValue="0" />
                <LightOff $w={58} $h={34}>OFF</LightOff>
            </LightColumn>
            <RingRow>
                {rings.map(([name, art], i) => (
                    <RingButton key={name} aria-label={name} $active={ring === i} onClick={() => setRing(i)}>
                        <svg width="42" height="42" viewBox="-1 -1 42 42" stroke="#222" strokeWidth="1.800">{art}</svg>
                    </RingButton>
                ))}
            </RingRow>
        </LightPanel>
    );
};

const MoveIcon = ({ d, flip }) => (
    <svg width="34" height="34" viewBox="0 0 34 34" aria-hidden="true">
        <defs>
            <linearGradient id={`move${d.length}${flip}`} x1={flip === 'h' ? 1 : 0} x2={flip === 'r' ? 1 : 0} y1="0" y2={flip === 'h' || flip === 'r' ? 0 : 1}>
                <stop offset="0" stopColor={flip ? '#dff2ff' : '#1e9cf5'} />
                <stop offset="1" stopColor={flip ? '#1e9cf5' : '#dff2ff'} />
            </linearGradient>
        </defs>
        <path d={d} fill={`url(#move${d.length}${flip})`} stroke="#222" strokeWidth="2" />
    </svg>
);

const MotionControl = () => (
    <MotionPanel>
        <MotionTop>
            <Pad>
                <PadButton $area="up" aria-label="上"><MoveIcon d="M17 3L32 30H2Z" /></PadButton>
                <PadButton $area="left" aria-label="左"><MoveIcon flip="h" d="M3 17L28 2V32Z" /></PadButton>
                <PadButton $area="right" aria-label="右"><MoveIcon flip="r" d="M31 17L6 2V32Z" /></PadButton>
                <PadButton $area="down" aria-label="下"><MoveIcon flip="v" d="M17 31L32 5H2Z" /></PadButton>
            </Pad>
            <Lift>
                <PadButton aria-label="升"><MoveIcon d="M17 2L32 17H25V32H9V17H2Z" /></PadButton>
                <PadButton aria-label="降"><MoveIcon flip="v" d="M17 32L32 17H25V1H9V17H2Z" /></PadButton>
            </Lift>
            <SpeedColumn>
                <output>6.580</output>
                <VSlider type="range" aria-label="Z 速度" $length={90} min="0" max="100" defaultValue="60" />
            </SpeedColumn>
        </MotionTop>
        <MotionRow>
            <output>6.786</output>
            <HSlider type="range" aria-label="XY 速度" min="0" max="100" defaultValue="39" />
            <FlatButton $w={54} $h={40}>设置</FlatButton>
        </MotionRow>
        <JogRow>
            <CheckLabel><CheckBox type="checkbox" />点动</CheckLabel>
            <JogInput aria-label="步长" defaultValue="2.0000" />
            <span>mm</span>
        </JogRow>
    </MotionPanel>
);

const AxisReadout = () => (
    <Readout $dark>
        {['X', 'Y', 'Z'].map((axis) => (
            <AxisRow key={axis}>
                <ZeroButton>{axis}<ZeroSub>0</ZeroSub></ZeroButton>
                <AxisValue>0.000</AxisValue>
                <HalfButton><span>{axis}</span><HalfBar /><span>2</span></HalfButton>
            </AxisRow>
        ))}
    </Readout>
);

const IconGrid = ({ items }) => (
    <ToolGrid>
        {items.map(([name, art]) => <ToolButton key={name} title={name}><Icon>{art}</Icon></ToolButton>)}
    </ToolGrid>
);

const Tools = () => (
    <ToolArea>
        <IconGrid items={shapeIcons} />
        <IconGrid items={probeIcons} />
        <IconGrid items={buildIcons} />
        <ToolGroups>
            <ToolGroup $cols="73px 74px 54px">
                <ToolButton $w={73} $drop title="原点"><Axes label="O" dot /><Caret /></ToolButton>
                <ToolButton $w={74} $drop title="直线"><Axes label="L" /><Caret /></ToolButton>
                <ToolButton title="保存坐标系"><Axes save /></ToolButton>
                <ToolButton $w={73} $drop title="S"><Axes label="S" /><Caret /></ToolButton>
                <ToolButton $w={74} $drop title="3D"><Axes label="3D" /><Caret /></ToolButton>
            </ToolGroup>
            <ToolGroup $cols="repeat(3, 54px)">
                {exportIcons.map(([name, art]) => <ToolButton key={name} title={name}><Icon>{art}</Icon></ToolButton>)}
            </ToolGroup>
            <ToolGroup $cols="54px 73px">
                <ToolButton title="颜色"><Icon><path d="M3 8H13V29H3Z" fill="#f00" stroke="none" /><path d="M13 8H23V29H13Z" fill="#0f0" stroke="none" /><path d="M23 8H33V29H23Z" fill="#00f" stroke="none" /></Icon></ToolButton>
                <ToolButton $w={73} $drop title="对中"><Icon><path d="M5 11V4H12M26 4H33V11M33 25V32H26M12 32H5V25" strokeWidth="3" /><path d="M19 3V33M5 18H33" stroke="#ff5a5a" /></Icon><Caret /></ToolButton>
                <ToolButton title="路径"><Icon><path d="M1 11H24V36M9 7L14 11L9 15M20 23L24 28L28 23" /><circle cx="24" cy="11" r="4.5" fill={RED} stroke="none" /></Icon></ToolButton>
                <ToolButton $w={73} $drop title="回零"><Icon><rect x="26" y="4" width="5" height="11" fill="#000" stroke="none" /><path d="M18 1L35 16H1Z" fill={RED} stroke="none" /><path d="M5 18H31V36H5Z" fill="#000" stroke="none" /><path d="M8 22H12V26H8ZM14 22H18V26H14ZM8 28H12V32H8ZM14 28H18V32H14ZM21 21H28V34H21Z" fill="#fff" stroke="none" /></Icon><Caret /></ToolButton>
            </ToolGroup>
        </ToolGroups>
    </ToolArea>
);

const columns = ['内容', '测量值', '标准值', '误差值', '上公差', '下公差', '状态', ''];

const Elements = () => (
    <ElementPanel>
        <RunBar>
            {runIcons.map(([name, art], i) => <ToolButton key={name} $w={i % 2 ? 40 : 41} $h={43} title={name}><Icon box={28}>{art}</Icon></ToolButton>)}
            <BarSeparator $right={5} />
            {runTools.map(([name, art], i) => <ToolButton key={name} $w={i % 2 ? 40 : 41} $h={43} title={name}><Icon box={28}>{art}</Icon></ToolButton>)}
        </RunBar>
        <ListRow>
            <ListLeft><CheckLabel><CheckBox type="checkbox" />只显示超差元素</CheckLabel></ListLeft>
            <ListBox />
        </ListRow>
        <ElementTable>
            <Caption>参考坐标系：</Caption>
            <thead>
                <tr>{columns.map((name, i) => <HeadCell key={name} $w={i < 7 ? '14%' : '2%'}>{name}</HeadCell>)}</tr>
            </thead>
            <tbody>
                {[1, 2, 3, 4, 5, 6, 7, 8].map((row) => (
                    <tr key={row}>{columns.map((name) => <Cell key={name} />)}</tr>
                ))}
            </tbody>
        </ElementTable>
        <ShowAll><CheckLabel><CheckBox type="checkbox" />全部显示</CheckLabel></ShowAll>
    </ElementPanel>
);

const tabNames = ['图形区', '报表', '匹配', '地图', '快速运动'];

const Graph = () => {
    const [tab, setTab] = useState('图形区');
    return (
        <>
            <GraphPanel>
                <GraphBar>
                    {graphIcons.map(([name, art]) => <ToolButton key={name} $w={63} $h={43} $drop title={name}><Icon box={28}>{art}</Icon><Caret /></ToolButton>)}
                    <BarSeparator $right={6} />
                    {viewIcons.map(([name, art], i) => <ToolButton key={name} $w={i % 2 ? 43 : 44} $h={43} $active={name === '坐标轴'} title={name}><Icon box={28}>{art}</Icon></ToolButton>)}
                    <BarSeparator $right={6} />
                    {setupIcons.map(([name, art], i) => <ToolButton key={name} $w={i % 2 ? 43 : 44} $h={43} title={name}><Icon box={28}>{art}</Icon></ToolButton>)}
                </GraphBar>
                <GraphCanvas>
                    <Origin width="64" height="62" fill="none" strokeWidth="1.5">
                        <path d="M2 43.500H33M18 28V60" stroke="#111" />
                        <path d="M18 1V28" stroke="#3be03b" />
                        <path d="M33 43.500H62M52 38L62 43.500L52 49" stroke="#e83030" />
                    </Origin>
                    <AxesMark width="62" height="68" fill="none" strokeWidth="2">
                        <path d="M16 56V18" stroke="#3be03b" /><path d="M12 26L16 17L20 26Z" fill="#3be03b" />
                        <path d="M16 56H48" stroke="#f04848" /><path d="M44 51L54 56L44 61Z" fill="#f04848" />
                        <rect x="13" y="54" width="5" height="5" fill="#4040e0" />
                        <g fontFamily="Liberation Serif, serif" fontSize="19" fill="#000" textAnchor="middle">
                            <text x="21" y="14">Y</text><text x="21" y="56">Z</text><text x="55" y="55">X</text>
                        </g>
                    </AxesMark>
                </GraphCanvas>
            </GraphPanel>
            <Tabs>
                {tabNames.map((name) => <Tab key={name} $active={tab === name} onClick={() => setTab(name)}>{name}</Tab>)}
            </Tabs>
        </>
    );
};

const status = ['', '1.0X', 'A=0,B=0', '机械坐标系', '坐标系模式2', 'mm', '角度', '直角坐标', '硬件服务器未连接', '未开启录制', ''];

const taskItems = [
    [297, 72, 13, '#f6b27c'], [388, 36, 3, '#8fb8dc'], [467, 26, 3, '#b4c4cc'], [835, 24, 3, '#d8a0a4'],
    [1130, 24, 3, '#b4cce0'], [1179, 72, 13, '#eaf3f8'], [1197, 36, 3, '#8fb0d8'],
];

const App = () => (
    <Page>
        <GlobalStyle />
        <TopBars />
        <Main>
            <SideBar>
                {sideIcons.map(([name, art]) => <SideButton key={name} title={name} $active={name === '暂停'}><Icon>{art}</Icon></SideButton>)}
            </SideBar>
            <VideoView />
            <RightSide>
                <TopRow>
                    <LightControl />
                    <MotionControl />
                    <AxisReadout />
                </TopRow>
                <MidRow>
                    <Tools />
                    <Elements />
                </MidRow>
                <Graph />
            </RightSide>
        </Main>
        <StatusBar $cols="857fr 159fr 159fr 159fr 159fr 83fr 115fr 159fr 219fr 159fr 652fr">
            {status.map((text, i) => <StatusCell key={i} $first={i === 0} $small={/^[\w.=,]+$/.test(text)}>{text}</StatusCell>)}
        </StatusBar>
        <TaskBar>
            {taskItems.map(([x, w, h, c]) => <TaskItem key={x} $x={x} $w={w} $h={h} $c={c} />)}
            <Clock>11:35 周四</Clock>
            <ClockDot />
        </TaskBar>
    </Page>
);

export default App;
